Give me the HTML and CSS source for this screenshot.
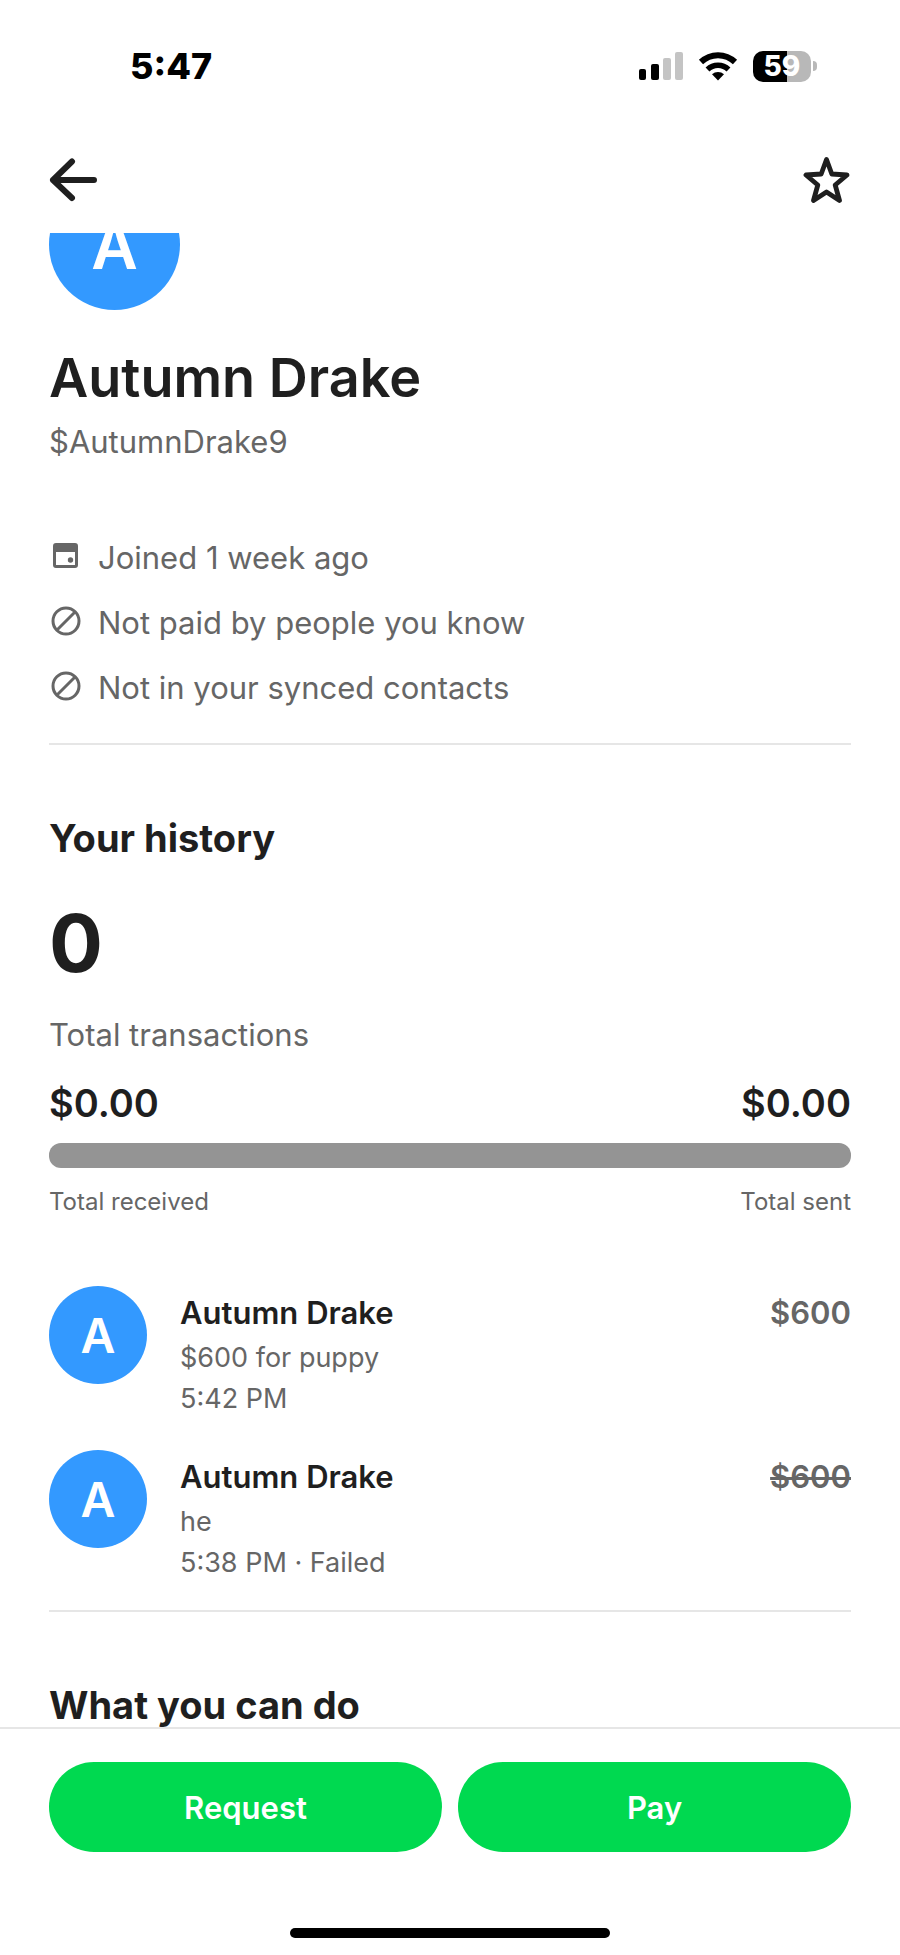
FILE: index.html
```html
<!DOCTYPE html>
<html lang="en">
    <head>
        <meta charset="utf-8">
        <meta name="viewport" content="width=device-width, initial-scale=1">
        <title>Autumn Drake</title>
        <link rel="stylesheet" href="styles.css">
    </head>
    <body>
        <header class="top">
            <div class="status-bar">
                <span class="time">5:47</span>
                <div class="status-icons">
                    <svg width="44" height="30" viewBox="0 0 44 30">
                        <rect x="0" y="18" width="7" height="11" rx="2"/>
                        <rect x="12" y="13" width="8" height="16" rx="2"/>
                        <rect x="24" y="7" width="8" height="22" rx="2" fill="#c4c4c4"/>
                        <rect x="36" y="1" width="8" height="28" rx="2" fill="#c4c4c4"/>
                    </svg>
                    <svg width="40" height="30" viewBox="0 0 40 30">
                        <path d="M3 11a24.500 24.500 0 0 1 34 0" fill="none" stroke="#000" stroke-width="6"/>
                        <path d="M9.500 18.500a15 15 0 0 1 21 0" fill="none" stroke="#000" stroke-width="5.500"/>
                        <path d="M20 29.500l-6-6.300a9 9 0 0 1 12 0z"/>
                    </svg>
                    <div class="battery">
                        <span class="battery-level">59</span>
                        <span class="battery-tip"></span>
                    </div>
                </div>
            </div>
            <nav class="nav">
                <button class="icon-button" aria-label="Back">
                    <svg width="48" height="48" viewBox="0 0 48 48" fill="none" stroke="#1f1f1f" stroke-width="6" stroke-linecap="round" stroke-linejoin="round">
                        <path d="M45 24H4M23 5.500L4 24l19 18"/>
                    </svg>
                </button>
                <button class="icon-button" aria-label="Add to favorites">
                    <svg width="48" height="48" viewBox="0 0 48 48" fill="none" stroke="#1f1f1f" stroke-width="4.800" stroke-linejoin="round">
                        <path d="M23.500 3.500l5.300 14.500 15.200 1-11.800 10 4.300 15.500-13-8.500-13 8.500L14.800 29 3 19l15.200-1z"/>
                    </svg>
                </button>
            </nav>
        </header>

        <main class="content">
            <div class="avatar avatar-large">A</div>
            <h1>Autumn Drake</h1>
            <p class="cashtag">$AutumnDrake9</p>

            <ul class="facts">
                <li>
                    <svg width="34" height="34" viewBox="0 0 34 34">
                        <path fill="#666" fill-rule="evenodd" d="M7 2h19a3 3 0 0 1 3 3v19a3 3 0 0 1-3 3H7a3 3 0 0 1-3-3V5a3 3 0 0 1 3-3zM7 11v13h19V11z"/>
                        <circle cx="21.500" cy="19" r="2.700" fill="#666"/>
                    </svg>
                    Joined 1 week ago
                </li>
                <li>
                    <svg width="34" height="34" viewBox="0 0 34 34" fill="none" stroke="#666" stroke-width="3">
                        <circle cx="17" cy="15" r="13"/>
                        <path d="M8 24L26 6"/>
                    </svg>
                    Not paid by people you know
                </li>
                <li>
                    <svg width="34" height="34" viewBox="0 0 34 34" fill="none" stroke="#666" stroke-width="3">
                        <circle cx="17" cy="15" r="13"/>
                        <path d="M8 24L26 6"/>
                    </svg>
                    Not in your synced contacts
                </li>
            </ul>

            <section class="section">
                <h2>Your history</h2>
                <p class="count">0</p>
                <p class="count-label">Total transactions</p>
                <div class="split amounts">
                    <span>$0.00</span>
                    <span>$0.00</span>
                </div>
                <div class="total-bar"></div>
                <div class="split labels">
                    <span>Total received</span>
                    <span>Total sent</span>
                </div>

                <ul class="history">
                    <li>
                        <div class="avatar">A</div>
                        <div class="details">
                            <h3>Autumn Drake</h3>
                            <p>$600 for puppy</p>
                            <p>5:42 PM</p>
                        </div>
                        <span class="price">$600</span>
                    </li>
                    <li>
                        <div class="avatar">A</div>
                        <div class="details">
                            <h3>Autumn Drake</h3>
                            <p>he</p>
                            <p>5:38 PM · Failed</p>
                        </div>
                        <s class="price">$600</s>
                    </li>
                </ul>
            </section>

            <section class="section">
                <h2>What you can do</h2>
            </section>
        </main>

        <footer class="bottom">
            <div class="button-container">
                <button>Request</button>
                <button>Pay</button>
            </div>
            <div class="home-indicator"></div>
        </footer>
    </body>
</html>
```
FILE: styles.css
```css
* {
    box-sizing: border-box;
}

body {
    display: flex;
    flex-direction: column;
    height: 100vh;
    margin: 0;
    background-color: #fff;
    color: #1f1f1f;
    font-family: Inter, "Liberation Sans", sans-serif;
    font-size: 31px;
    line-height: 40px;
}

h1, h2, h3, p, ul {
    margin: 0;
    padding: 0;
}

ul {
    list-style: none;
}

button {
    border: none;
    padding: 0;
    font: inherit;
    cursor: pointer;
}

/* status bar and navigation */
.status-bar {
    display: flex;
    justify-content: space-between;
    align-items: center;
    padding: 46px 83px 0 130px;
    color: #000;
}

.time {
    font-size: 36px;
    font-weight: 800;
}

.status-icons {
    display: flex;
    align-items: center;
    gap: 15px;
}

.battery {
    display: flex;
    align-items: center;
    gap: 2px;
}

.battery-level {
    width: 58px;
    border-radius: 10px;
    background: linear-gradient(to right, #000 59%, #b8b8b8 59%);
    color: #fff;
    font-size: 28px;
    font-weight: 800;
    line-height: 31px;
    text-align: center;
}

.battery-tip {
    width: 4px;
    height: 10px;
    border-radius: 0 4px 4px 0;
    background-color: #b8b8b8;
}

.nav {
    display: flex;
    justify-content: space-between;
    padding: 70px 49px 29px;
}

.icon-button {
    height: 48px;
    background: none;
}

.icon-button svg {
    display: block;
}

/* scrolled profile */
.content {
    flex: 1;
    min-height: 0;
    overflow: hidden;
    padding: 0 49px;
}

.avatar {
    flex: none;
    width: 98px;
    height: 98px;
    border-radius: 50%;
    background-color: #3399ff;
    color: #fff;
    font-size: 48px;
    font-weight: 600;
    line-height: 100px;
    text-align: center;
}

.avatar-large {
    width: 131px;
    height: 131px;
    margin-top: -54px;
    font-size: 64px;
    line-height: 133px;
}

h1 {
    margin-top: 34px;
    font-size: 54px;
    font-weight: 600;
    line-height: 68px;
}

.cashtag {
    margin-top: 10px;
    color: #666;
}

.facts {
    display: flex;
    flex-direction: column;
    gap: 25px;
    margin-top: 76px;
    padding-bottom: 35px;
    color: #666;
}

.facts li {
    display: flex;
    align-items: center;
    gap: 15px;
}

.section {
    padding-top: 69px;
    border-top: 2px solid #e6e6e6;
}

h2 {
    font-size: 38px;
    font-weight: 700;
    line-height: 48px;
}

.count {
    margin-top: 33px;
    font-size: 80px;
    font-weight: 700;
    line-height: 96px;
}

.count-label {
    margin-top: 24px;
    color: #666;
}

.split {
    display: flex;
    justify-content: space-between;
}

.amounts {
    margin-top: 24px;
    font-size: 38px;
    font-weight: 600;
    line-height: 48px;
}

.total-bar {
    height: 25px;
    margin-top: 16px;
    border-radius: 12px;
    background-color: #949494;
}

.labels {
    margin-top: 18px;
    color: #666;
    font-size: 24px;
    line-height: 32px;
}

.history {
    display: flex;
    flex-direction: column;
    gap: 31px;
    margin-top: 68px;
    padding-bottom: 27px;
}

.history li {
    display: flex;
}

.details {
    flex: 1;
    padding: 7px 0 0 33px;
}

.details p {
    color: #666;
    font-size: 27px;
    line-height: 41px;
}

h3 {
    margin-bottom: 4px;
    font-size: 31px;
    font-weight: 600;
}

.price {
    padding-top: 7px;
    color: #666;
    font-weight: 600;
    text-decoration-thickness: 3px;
}

/* actions */
.bottom {
    padding: 33px 49px 17px;
    border-top: 2px solid #e6e6e6;
}

.button-container {
    display: flex;
    gap: 16px;
}

.button-container button {
    flex: 1;
    height: 90px;
    padding-top: 2px;
    border-radius: 45px;
    background-color: #00d950;
    color: #fff;
    font-weight: 600;
}

.home-indicator {
    width: 40%;
    height: 10px;
    margin: 76px auto 0;
    border-radius: 5px;
    background-color: #000;
}
```
